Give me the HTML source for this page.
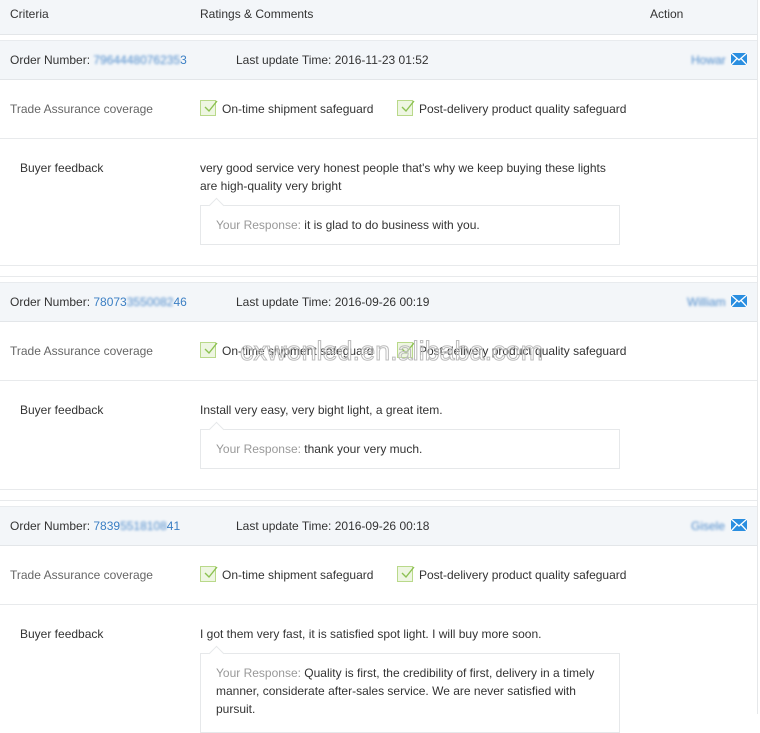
<!DOCTYPE html>
<html><head><meta charset="utf-8"><style>
*{margin:0;padding:0;box-sizing:border-box}
body{width:760px;height:714px;overflow:hidden;background:#fff;font-family:"Liberation Sans",sans-serif;font-size:12px;color:#333;position:relative}
.a{position:absolute;white-space:nowrap;line-height:18px;margin-top:1px}
.hd{position:absolute;left:0;width:757px;background:#f3f6f9;border-top:1px solid #e8ebee;border-bottom:1px solid #e3e6e9}
.ln{position:absolute;left:0;width:757px;height:1px;background:#e8eaec}
.blue{color:#3b7fc4}
.blur{filter:blur(1.2px);color:#4f8ccc}
.g{color:#666}
.cb{position:absolute;width:16px;height:16px;border:1px solid #b9d98a;background:#eef6e2}
.cb svg{position:absolute;left:1px;top:-3px}
.box{position:absolute;left:200px;width:420px;border:1px solid #e6e8ea;background:#fff}
.box:before{content:"";position:absolute;left:10px;top:-6px;width:10px;height:10px;background:#fff;border-left:1px solid #e6e8ea;border-top:1px solid #e6e8ea;transform:rotate(45deg)}
.resp{color:#999}
</style></head><body>
<div class="hd" style="top:0;height:35px;border-top:none"></div>
<div class="a" style="left:10px;top:4px">Criteria</div>
<div class="a" style="left:200px;top:4px">Ratings &amp; Comments</div>
<div class="a" style="left:650px;top:4px">Action</div>
<div style="position:absolute;left:757px;top:0;width:1px;height:714px;background:#e6e8ea"></div>

<!-- block 1 -->
<div class="hd" style="top:40px;height:40px"></div>
<div class="a" style="left:10px;top:50px">Order Number: <span class="blur">7964448076235</span><span class="blue">3</span></div>
<div class="a" style="left:236px;top:50px">Last update Time: 2016-11-23 01:52</div>
<div class="a blur" style="left:691px;top:50px">Howar</div>
<svg style="position:absolute;left:731px;top:53px" width="16" height="12" viewBox="0 0 16 12"><rect width="16" height="12" fill="#2a8ee0"/><path d="M0 0L8 7L16 0M0 12L6 5.5M16 12L10 5.5" stroke="#fff" stroke-width="1.3" fill="none"/></svg>
<div class="a g" style="left:10px;top:99px">Trade Assurance coverage</div>
<div class="cb" style="left:200px;top:100px"><svg width="16" height="16" viewBox="0 0 16 16"><path d="M3 9L7 13L15 3" stroke="#8cc152" stroke-width="1.4" fill="none"/></svg></div>
<div class="a" style="left:222px;top:99px">On-time shipment safeguard</div>
<div class="cb" style="left:397px;top:100px"><svg width="16" height="16" viewBox="0 0 16 16"><path d="M3 9L7 13L15 3" stroke="#8cc152" stroke-width="1.4" fill="none"/></svg></div>
<div class="a" style="left:419px;top:99px">Post-delivery product quality safeguard</div>
<div class="ln" style="top:138px"></div>
<div class="a" style="left:20px;top:158px">Buyer feedback</div>
<div class="a" style="left:200px;top:158px">very good service very honest people that's why we keep buying these lights<br>are high-quality very bright</div>
<div class="box" style="top:205px;height:40px"><div class="a" style="left:15px;top:9px"><span class="resp">Your Response: </span>it is glad to do business with you.</div></div>
<div class="ln" style="top:265px"></div>
<div class="ln" style="top:276px"></div>

<!-- block 2 -->
<div class="hd" style="top:282px;height:40px"></div>
<div class="a" style="left:10px;top:292px">Order Number: <span class="blue">78073</span><span class="blur">3550082</span><span class="blue">46</span></div>
<div class="a" style="left:236px;top:292px">Last update Time: 2016-09-26 00:19</div>
<div class="a blur" style="left:687px;top:292px">William</div>
<svg style="position:absolute;left:731px;top:295px" width="16" height="12" viewBox="0 0 16 12"><rect width="16" height="12" fill="#2a8ee0"/><path d="M0 0L8 7L16 0M0 12L6 5.5M16 12L10 5.5" stroke="#fff" stroke-width="1.3" fill="none"/></svg>
<div class="a g" style="left:10px;top:341px">Trade Assurance coverage</div>
<div class="cb" style="left:200px;top:342px"><svg width="16" height="16" viewBox="0 0 16 16"><path d="M3 9L7 13L15 3" stroke="#8cc152" stroke-width="1.4" fill="none"/></svg></div>
<div class="a" style="left:222px;top:341px">On-time shipment safeguard</div>
<div class="cb" style="left:397px;top:342px"><svg width="16" height="16" viewBox="0 0 16 16"><path d="M3 9L7 13L15 3" stroke="#8cc152" stroke-width="1.4" fill="none"/></svg></div>
<div class="a" style="left:419px;top:341px">Post-delivery product quality safeguard</div>
<div class="a" style="left:240px;top:335px;font-size:27px;line-height:30px;color:rgba(255,255,255,0.2);-webkit-text-stroke:1px #bcbcbc">cxwonled.en.alibaba.com</div>
<div class="ln" style="top:380px"></div>
<div class="a" style="left:20px;top:400px">Buyer feedback</div>
<div class="a" style="left:200px;top:400px">Install very easy, very bight light, a great item.</div>
<div class="box" style="top:429px;height:40px"><div class="a" style="left:15px;top:9px"><span class="resp">Your Response: </span>thank your very much.</div></div>
<div class="ln" style="top:489px"></div>
<div class="ln" style="top:500px"></div>

<!-- block 3 -->
<div class="hd" style="top:506px;height:40px"></div>
<div class="a" style="left:10px;top:516px">Order Number: <span class="blue">7839</span><span class="blur">5518108</span><span class="blue">41</span></div>
<div class="a" style="left:236px;top:516px">Last update Time: 2016-09-26 00:18</div>
<div class="a blur" style="left:691px;top:516px">Gisele</div>
<svg style="position:absolute;left:731px;top:519px" width="16" height="12" viewBox="0 0 16 12"><rect width="16" height="12" fill="#2a8ee0"/><path d="M0 0L8 7L16 0M0 12L6 5.5M16 12L10 5.5" stroke="#fff" stroke-width="1.3" fill="none"/></svg>
<div class="a g" style="left:10px;top:565px">Trade Assurance coverage</div>
<div class="cb" style="left:200px;top:566px"><svg width="16" height="16" viewBox="0 0 16 16"><path d="M3 9L7 13L15 3" stroke="#8cc152" stroke-width="1.4" fill="none"/></svg></div>
<div class="a" style="left:222px;top:565px">On-time shipment safeguard</div>
<div class="cb" style="left:397px;top:566px"><svg width="16" height="16" viewBox="0 0 16 16"><path d="M3 9L7 13L15 3" stroke="#8cc152" stroke-width="1.4" fill="none"/></svg></div>
<div class="a" style="left:419px;top:565px">Post-delivery product quality safeguard</div>
<div class="ln" style="top:604px"></div>
<div class="a" style="left:20px;top:624px">Buyer feedback</div>
<div class="a" style="left:200px;top:624px">I got them very fast, it is satisfied spot light. I will buy more soon.</div>
<div class="box" style="top:653px;height:80px"><div class="a" style="left:15px;top:9px"><span class="resp">Your Response: </span>Quality is first, the credibility of first, delivery in a timely<br>manner, considerate after-sales service. We are never satisfied with<br>pursuit.</div></div>
</body></html>
